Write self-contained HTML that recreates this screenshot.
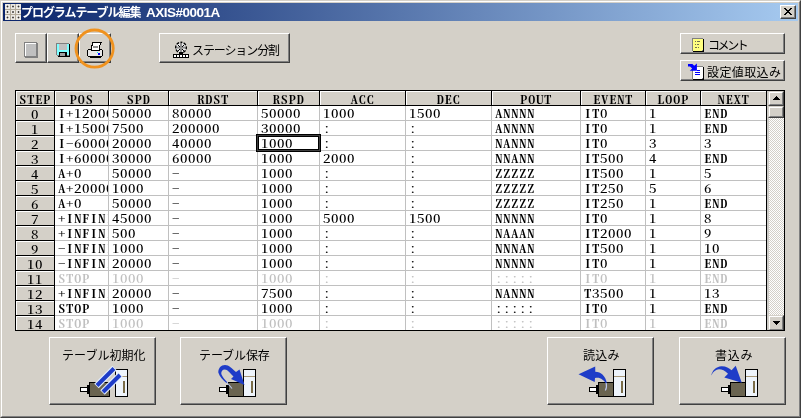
<!DOCTYPE html><html lang="ja"><head><meta charset="utf-8"><title>プログラムテーブル編集 AXIS#0001A</title><style>
html,body{margin:0;padding:0;}
body{width:801px;height:418px;overflow:hidden;background:#D4D0C8;position:relative;
 font-family:"Liberation Sans","Noto Sans CJK JP",sans-serif;font-size:12px;color:#000;}
.abs{position:absolute;}
.lbl,.ttext,.grid{will-change:transform;}
.win{position:absolute;left:0;top:0;width:801px;height:418px;box-sizing:border-box;background:#D4D0C8;
 border-left:1px solid #D4D0C8;border-top:1px solid #D4D0C8;border-right:1px solid #404040;border-bottom:1px solid #404040;}
.win2{position:absolute;left:1px;top:1px;width:799px;height:416px;box-sizing:border-box;
 border-left:1px solid #fff;border-top:1px solid #fff;border-right:1px solid #808080;border-bottom:1px solid #808080;}
.title{position:absolute;left:3px;top:3px;width:795px;height:18px;background:linear-gradient(to right,#0A246A 0%,#A6CAF0 100%);}
.ttext{position:absolute;left:23px;top:3px;height:18px;line-height:18px;color:#fff;font-weight:bold;font-size:12px;white-space:nowrap;letter-spacing:-0.6px;}
.btn{position:absolute;box-sizing:border-box;background:#D4D0C8;
 border-left:1px solid #fff;border-top:1px solid #fff;border-right:1px solid #404040;border-bottom:1px solid #404040;}
.btn::after{content:"";position:absolute;left:0;top:0;right:0;bottom:0;border-right:1px solid #808080;border-bottom:1px solid #808080;}
.lbl{position:absolute;white-space:nowrap;font-size:12px;line-height:14px;}
.grid{position:absolute;left:15px;top:90px;width:770px;height:241px;background:#000;}
.hc{position:absolute;box-sizing:border-box;background:#D4D0C8;box-shadow:inset 1px 1px 0 #fff;
 font-family:"Noto Serif CJK SC","IPAGothic","Liberation Mono",monospace;font-feature-settings:"hwid";font-weight:500;font-size:15px;letter-spacing:0.5px;text-align:center;white-space:nowrap;overflow:hidden;height:14px;line-height:14px;}
.dc{position:absolute;box-sizing:border-box;background:#fff;font-family:"Noto Serif CJK SC","IPAGothic","Liberation Mono",monospace;font-feature-settings:"hwid";font-weight:500;font-size:15px;letter-spacing:0.5px;
 white-space:nowrap;overflow:hidden;height:14px;line-height:14px;padding-left:3px;}
.hc span,.dc span{display:inline-block;transform:scaleY(0.78);transform-origin:0 100%;position:relative;}
.hc b,.dc b{font-weight:600;}
.hc span{top:0px;}
.dc span{top:-1px;}
.g{color:#C0C0C0;}
.vl{position:absolute;width:1px;background:#C0C0C0;}
.hl{position:absolute;height:1px;background:#C0C0C0;}
svg{position:absolute;overflow:visible;}
</style></head><body>
<div class="win"></div><div class="win2"></div>
<div class="title"></div>
<svg style="left:5px;top:4px" width="16" height="16" viewBox="0 0 16 16"><rect width="16" height="16" fill="#B4AC9C" shape-rendering="crispEdges"/>
<rect x="0" y="0" width="5" height="5" fill="#E4E0DA" shape-rendering="crispEdges"/>
<rect x="0.5" y="0.5" width="4" height="4" fill="#F8F7F4"/>
<circle cx="2.5" cy="2.5" r="0.95" fill="#35322E"/>
<rect x="6" y="0" width="4" height="5" fill="#E4E0DA" shape-rendering="crispEdges"/>
<rect x="6.5" y="0.5" width="3" height="4" fill="#F8F7F4"/>
<circle cx="8.0" cy="2.5" r="0.95" fill="#35322E"/>
<rect x="11" y="0" width="5" height="5" fill="#E4E0DA" shape-rendering="crispEdges"/>
<rect x="11.5" y="0.5" width="4" height="4" fill="#F8F7F4"/>
<circle cx="13.5" cy="2.5" r="0.95" fill="#35322E"/>
<rect x="0" y="6" width="5" height="4" fill="#E4E0DA" shape-rendering="crispEdges"/>
<rect x="0.5" y="6.5" width="4" height="3" fill="#F8F7F4"/>
<circle cx="2.5" cy="8.0" r="0.95" fill="#35322E"/>
<rect x="6" y="6" width="4" height="4" fill="#E4E0DA" shape-rendering="crispEdges"/>
<rect x="6.5" y="6.5" width="3" height="3" fill="#F8F7F4"/>
<circle cx="8.0" cy="8.0" r="0.95" fill="#35322E"/>
<rect x="11" y="6" width="5" height="4" fill="#E4E0DA" shape-rendering="crispEdges"/>
<rect x="11.5" y="6.5" width="4" height="3" fill="#F8F7F4"/>
<circle cx="13.5" cy="8.0" r="0.95" fill="#35322E"/>
<rect x="0" y="11" width="5" height="5" fill="#E4E0DA" shape-rendering="crispEdges"/>
<rect x="0.5" y="11.5" width="4" height="4" fill="#F8F7F4"/>
<circle cx="2.5" cy="13.5" r="0.95" fill="#35322E"/>
<rect x="6" y="11" width="4" height="5" fill="#E4E0DA" shape-rendering="crispEdges"/>
<rect x="6.5" y="11.5" width="3" height="4" fill="#F8F7F4"/>
<circle cx="8.0" cy="13.5" r="0.95" fill="#35322E"/>
<rect x="11" y="11" width="5" height="5" fill="#E4E0DA" shape-rendering="crispEdges"/>
<rect x="11.5" y="11.5" width="4" height="4" fill="#F8F7F4"/>
<circle cx="13.5" cy="13.5" r="0.95" fill="#35322E"/>
</svg>
<div class="ttext" id="t1" style="left:21px;top:4px;letter-spacing:-1.05px">プログラムテーブル編集</div>
<div class="ttext" id="t2" style="left:146px;top:4px;font-size:13.5px;letter-spacing:-0.5px">AXIS#0001A</div>
<div class="btn" style="left:780px;top:5px;width:16px;height:14px"></div>
<svg style="left:784px;top:8px" width="8" height="7" viewBox="0 0 8 7" shape-rendering="crispEdges"><path d="M0 0h2v1h-2zM6 0h2v1h-2zM1 1h2v1h-2zM5 1h2v1h-2zM2 2h4v1h-4zM3 3h2v1h-2zM2 4h4v1h-4zM1 5h2v1h-2zM5 5h2v1h-2zM0 6h2v1h-2zM6 6h2v1h-2z" fill="#000"/></svg>
<div class="btn" style="left:15px;top:33px;width:32px;height:30px"></div>
<div class="btn" style="left:47px;top:33px;width:32px;height:30px"></div>
<div class="btn" style="left:79px;top:33px;width:32px;height:30px"></div>
<svg style="left:24px;top:42px" width="14" height="16" viewBox="0 0 14 16" shape-rendering="crispEdges"><rect x="0" y="0" width="13" height="15" fill="#808080"/><rect x="1" y="1" width="13" height="15" fill="#808080"/><rect x="1" y="1" width="11" height="13" fill="#fff"/><rect x="2" y="2" width="10" height="12" fill="#C0C0C0"/></svg>
<svg style="left:56px;top:43px" width="14" height="14" viewBox="0 0 14 14" shape-rendering="crispEdges"><rect x="1" y="1" width="13" height="13" fill="#000"/><rect x="0" y="0" width="13" height="13" fill="#808080"/><rect x="1" y="1" width="12" height="11" fill="#80FFFF"/><rect x="3" y="0" width="8" height="7" fill="#808080"/><rect x="3" y="1" width="8" height="6" fill="#C0C0C0"/><rect x="3" y="9" width="8" height="4" fill="#000"/><rect x="4" y="10" width="5" height="3" fill="#A0A0A0"/><rect x="0" y="12" width="2" height="2" fill="#D4D0C8"/><rect x="1" y="12" width="2" height="1" fill="#808080"/></svg>
<svg style="left:87px;top:42px" width="16" height="16" viewBox="0 0 16 16" shape-rendering="crispEdges"><path d="M5 0h10v1h-1v2h-1v6h-9v-6h1z" fill="#000"/><path d="M6 1h7v2h-1v5h-7v-4h1z" fill="#fff"/><rect x="6" y="4" width="5" height="2" fill="#909090"/><path d="M1 7h3v2h9v-2h2v1h1v6h-1v1h-14v-1h-1v-6h1z" fill="#000"/><path d="M1 8h3v1h9v-1h2v6h-14z" fill="#E8E8E8"/><rect x="11" y="11" width="2" height="2" fill="#0000FF"/><rect x="10" y="10" width="1" height="1" fill="#00FFFF"/><rect x="3" y="15" width="11" height="1" fill="#000"/></svg>
<svg style="left:72px;top:26px" width="46" height="46" viewBox="0 0 46 46"><circle cx="22.6" cy="22.6" r="18.6" fill="none" stroke="#F0921E" stroke-width="2.8"/></svg>
<div class="btn" style="left:159px;top:33px;width:131px;height:30px"></div>
<svg style="left:173px;top:42px" width="16" height="16" viewBox="0 0 16 16"><circle cx="8" cy="5.6" r="5.3" fill="#EDEDED"/><rect x="7" y="1" width="2" height="9" fill="#909090"/><rect x="3.4" y="4.6" width="9" height="2" fill="#909090"/><circle cx="8" cy="5.6" r="5.3" fill="none" stroke="#000" stroke-width="1.4" stroke-dasharray="2.9 1.26" stroke-dashoffset="1.45" transform="rotate(-90 8 5.6)"/><g fill="#000"><rect x="5" y="3" width="1" height="1"/><rect x="10" y="3" width="1" height="1"/><rect x="5" y="8" width="1" height="1"/><rect x="10" y="8" width="1" height="1"/><rect x="6" y="4" width="1" height="1"/><rect x="9" y="4" width="1" height="1"/><rect x="6" y="7" width="1" height="1"/><rect x="9" y="7" width="1" height="1"/></g><g shape-rendering="crispEdges"><rect x="6" y="10" width="4" height="2" fill="#000"/><rect x="0" y="12" width="16" height="4" fill="#000"/><rect x="1" y="13" width="2" height="2" fill="#fff"/><rect x="4" y="13" width="2" height="2" fill="#fff"/><rect x="7" y="13" width="2" height="2" fill="#fff"/><rect x="10" y="13" width="2" height="2" fill="#fff"/><rect x="13" y="13" width="2" height="2" fill="#fff"/></g></svg>
<div class="lbl" id="l_station" style="left:192px;top:44px;letter-spacing:-1.1px">ステーション分割</div>
<div class="btn" style="left:680px;top:33px;width:105px;height:21px"></div>
<div class="btn" style="left:680px;top:60px;width:105px;height:21px"></div>
<svg style="left:692px;top:38px" width="12" height="14" viewBox="0 0 12 14" shape-rendering="crispEdges"><rect x="1" y="1" width="11" height="13" fill="#000"/><rect x="0" y="0" width="11" height="13" fill="#808080"/><rect x="1" y="1" width="10" height="12" fill="#FFFF80"/><rect x="10" y="12" width="1" height="1" fill="#808080"/><g fill="#707050"><rect x="3" y="3" width="1" height="1"/><rect x="5" y="3" width="3" height="1"/><rect x="3" y="6" width="1" height="1"/><rect x="5" y="6" width="2" height="1"/><rect x="3" y="9" width="2" height="1"/><rect x="6" y="9" width="1" height="1"/></g></svg>
<div class="lbl" id="l_comment" style="left:707.6px;top:39px;letter-spacing:-2.4px">コメント</div>
<svg style="left:688px;top:63px" width="16" height="17" viewBox="0 0 16 17" shape-rendering="crispEdges"><rect x="5" y="4" width="11" height="13" fill="#000"/><rect x="4" y="3" width="11" height="13" fill="#808080"/><rect x="5" y="4" width="10" height="12" fill="#fff"/><rect x="14" y="15" width="1" height="1" fill="#808080"/><g fill="#0000FF"><rect x="9" y="7" width="3" height="1"/><rect x="7" y="9" width="5" height="1"/><rect x="7" y="11" width="5" height="1"/></g><path shape-rendering="geometricPrecision" d="M0 1 L4.4 1 L6.2 2.8 L8.9 0.6 L8.9 7.8 L1.8 7.8 L4.2 5.6 L2 3.4 L0 3.4 Z" fill="#0000FF"/></svg>
<div class="lbl" id="l_import" style="left:707px;top:66px;letter-spacing:0.4px">設定値取込み</div>
<div class="grid">
<div class="abs" style="left:40px;top:16px;width:711px;height:224px;background:#fff"></div>
<div class="hc" style="left:1px;top:1px;width:38px"><span><b>STEP</b></span></div>
<div class="hc" style="left:40px;top:1px;width:53px"><span><b>POS</b></span></div>
<div class="hc" style="left:94px;top:1px;width:59px"><span><b>SPD</b></span></div>
<div class="hc" style="left:154px;top:1px;width:88px"><span><b>RDST</b></span></div>
<div class="hc" style="left:243px;top:1px;width:61px"><span><b>RSPD</b></span></div>
<div class="hc" style="left:305px;top:1px;width:85px"><span><b>ACC</b></span></div>
<div class="hc" style="left:391px;top:1px;width:85px"><span><b>DEC</b></span></div>
<div class="hc" style="left:477px;top:1px;width:88px"><span><b>POUT</b></span></div>
<div class="hc" style="left:566px;top:1px;width:64px"><span><b>EVENT</b></span></div>
<div class="hc" style="left:631px;top:1px;width:54px"><span><b>LOOP</b></span></div>
<div class="hc" style="left:686px;top:1px;width:65px"><span><b>NEXT</b></span></div>
<div class="hc" style="left:1px;top:16px;width:38px"><span>0</span></div>
<div class="dc" style="left:40px;top:16px;width:53px"><span><b>I</b>+12000</span></div>
<div class="dc" style="left:94px;top:16px;width:59px"><span>50000</span></div>
<div class="dc" style="left:154px;top:16px;width:88px"><span>80000</span></div>
<div class="dc" style="left:243px;top:16px;width:61px"><span>50000</span></div>
<div class="dc" style="left:305px;top:16px;width:85px"><span>1000</span></div>
<div class="dc" style="left:391px;top:16px;width:85px"><span>1500</span></div>
<div class="dc" style="left:477px;top:16px;width:88px"><span><b>ANNNN</b></span></div>
<div class="dc" style="left:566px;top:16px;width:64px"><span><b>IT</b>0</span></div>
<div class="dc" style="left:631px;top:16px;width:54px"><span>1</span></div>
<div class="dc" style="left:686px;top:16px;width:65px"><span><b>END</b></span></div>
<div class="hc" style="left:1px;top:31px;width:38px"><span>1</span></div>
<div class="dc" style="left:40px;top:31px;width:53px"><span><b>I</b>+15000</span></div>
<div class="dc" style="left:94px;top:31px;width:59px"><span>7500</span></div>
<div class="dc" style="left:154px;top:31px;width:88px"><span>200000</span></div>
<div class="dc" style="left:243px;top:31px;width:61px"><span>30000</span></div>
<div class="dc" style="left:305px;top:31px;width:85px"><span>:</span></div>
<div class="dc" style="left:391px;top:31px;width:85px"><span>:</span></div>
<div class="dc" style="left:477px;top:31px;width:88px"><span><b>ANNNN</b></span></div>
<div class="dc" style="left:566px;top:31px;width:64px"><span><b>IT</b>0</span></div>
<div class="dc" style="left:631px;top:31px;width:54px"><span>1</span></div>
<div class="dc" style="left:686px;top:31px;width:65px"><span><b>END</b></span></div>
<div class="hc" style="left:1px;top:46px;width:38px"><span>2</span></div>
<div class="dc" style="left:40px;top:46px;width:53px"><span><b>I</b>-60000</span></div>
<div class="dc" style="left:94px;top:46px;width:59px"><span>20000</span></div>
<div class="dc" style="left:154px;top:46px;width:88px"><span>40000</span></div>
<div class="dc" style="left:243px;top:46px;width:61px"><span>1000</span></div>
<div class="dc" style="left:305px;top:46px;width:85px"><span>:</span></div>
<div class="dc" style="left:391px;top:46px;width:85px"><span>:</span></div>
<div class="dc" style="left:477px;top:46px;width:88px"><span><b>NANNN</b></span></div>
<div class="dc" style="left:566px;top:46px;width:64px"><span><b>IT</b>0</span></div>
<div class="dc" style="left:631px;top:46px;width:54px"><span>3</span></div>
<div class="dc" style="left:686px;top:46px;width:65px"><span>3</span></div>
<div class="hc" style="left:1px;top:61px;width:38px"><span>3</span></div>
<div class="dc" style="left:40px;top:61px;width:53px"><span><b>I</b>+60000</span></div>
<div class="dc" style="left:94px;top:61px;width:59px"><span>30000</span></div>
<div class="dc" style="left:154px;top:61px;width:88px"><span>60000</span></div>
<div class="dc" style="left:243px;top:61px;width:61px"><span>1000</span></div>
<div class="dc" style="left:305px;top:61px;width:85px"><span>2000</span></div>
<div class="dc" style="left:391px;top:61px;width:85px"><span>:</span></div>
<div class="dc" style="left:477px;top:61px;width:88px"><span><b>NNANN</b></span></div>
<div class="dc" style="left:566px;top:61px;width:64px"><span><b>IT</b>500</span></div>
<div class="dc" style="left:631px;top:61px;width:54px"><span>4</span></div>
<div class="dc" style="left:686px;top:61px;width:65px"><span><b>END</b></span></div>
<div class="hc" style="left:1px;top:76px;width:38px"><span>4</span></div>
<div class="dc" style="left:40px;top:76px;width:53px"><span><b>A</b>+0</span></div>
<div class="dc" style="left:94px;top:76px;width:59px"><span>50000</span></div>
<div class="dc" style="left:154px;top:76px;width:88px"><span>-</span></div>
<div class="dc" style="left:243px;top:76px;width:61px"><span>1000</span></div>
<div class="dc" style="left:305px;top:76px;width:85px"><span>:</span></div>
<div class="dc" style="left:391px;top:76px;width:85px"><span>:</span></div>
<div class="dc" style="left:477px;top:76px;width:88px"><span><b>ZZZZZ</b></span></div>
<div class="dc" style="left:566px;top:76px;width:64px"><span><b>IT</b>500</span></div>
<div class="dc" style="left:631px;top:76px;width:54px"><span>1</span></div>
<div class="dc" style="left:686px;top:76px;width:65px"><span>5</span></div>
<div class="hc" style="left:1px;top:91px;width:38px"><span>5</span></div>
<div class="dc" style="left:40px;top:91px;width:53px"><span><b>A</b>+20000</span></div>
<div class="dc" style="left:94px;top:91px;width:59px"><span>1000</span></div>
<div class="dc" style="left:154px;top:91px;width:88px"><span>-</span></div>
<div class="dc" style="left:243px;top:91px;width:61px"><span>1000</span></div>
<div class="dc" style="left:305px;top:91px;width:85px"><span>:</span></div>
<div class="dc" style="left:391px;top:91px;width:85px"><span>:</span></div>
<div class="dc" style="left:477px;top:91px;width:88px"><span><b>ZZZZZ</b></span></div>
<div class="dc" style="left:566px;top:91px;width:64px"><span><b>IT</b>250</span></div>
<div class="dc" style="left:631px;top:91px;width:54px"><span>5</span></div>
<div class="dc" style="left:686px;top:91px;width:65px"><span>6</span></div>
<div class="hc" style="left:1px;top:106px;width:38px"><span>6</span></div>
<div class="dc" style="left:40px;top:106px;width:53px"><span><b>A</b>+0</span></div>
<div class="dc" style="left:94px;top:106px;width:59px"><span>50000</span></div>
<div class="dc" style="left:154px;top:106px;width:88px"><span>-</span></div>
<div class="dc" style="left:243px;top:106px;width:61px"><span>1000</span></div>
<div class="dc" style="left:305px;top:106px;width:85px"><span>:</span></div>
<div class="dc" style="left:391px;top:106px;width:85px"><span>:</span></div>
<div class="dc" style="left:477px;top:106px;width:88px"><span><b>ZZZZZ</b></span></div>
<div class="dc" style="left:566px;top:106px;width:64px"><span><b>IT</b>250</span></div>
<div class="dc" style="left:631px;top:106px;width:54px"><span>1</span></div>
<div class="dc" style="left:686px;top:106px;width:65px"><span><b>END</b></span></div>
<div class="hc" style="left:1px;top:121px;width:38px"><span>7</span></div>
<div class="dc" style="left:40px;top:121px;width:53px"><span>+<b>INFINITY</b></span></div>
<div class="dc" style="left:94px;top:121px;width:59px"><span>45000</span></div>
<div class="dc" style="left:154px;top:121px;width:88px"><span>-</span></div>
<div class="dc" style="left:243px;top:121px;width:61px"><span>1000</span></div>
<div class="dc" style="left:305px;top:121px;width:85px"><span>5000</span></div>
<div class="dc" style="left:391px;top:121px;width:85px"><span>1500</span></div>
<div class="dc" style="left:477px;top:121px;width:88px"><span><b>NNNNN</b></span></div>
<div class="dc" style="left:566px;top:121px;width:64px"><span><b>IT</b>0</span></div>
<div class="dc" style="left:631px;top:121px;width:54px"><span>1</span></div>
<div class="dc" style="left:686px;top:121px;width:65px"><span>8</span></div>
<div class="hc" style="left:1px;top:136px;width:38px"><span>8</span></div>
<div class="dc" style="left:40px;top:136px;width:53px"><span>+<b>INFINITY</b></span></div>
<div class="dc" style="left:94px;top:136px;width:59px"><span>500</span></div>
<div class="dc" style="left:154px;top:136px;width:88px"><span>-</span></div>
<div class="dc" style="left:243px;top:136px;width:61px"><span>1000</span></div>
<div class="dc" style="left:305px;top:136px;width:85px"><span>:</span></div>
<div class="dc" style="left:391px;top:136px;width:85px"><span>:</span></div>
<div class="dc" style="left:477px;top:136px;width:88px"><span><b>NAAAN</b></span></div>
<div class="dc" style="left:566px;top:136px;width:64px"><span><b>IT</b>2000</span></div>
<div class="dc" style="left:631px;top:136px;width:54px"><span>1</span></div>
<div class="dc" style="left:686px;top:136px;width:65px"><span>9</span></div>
<div class="hc" style="left:1px;top:151px;width:38px"><span>9</span></div>
<div class="dc" style="left:40px;top:151px;width:53px"><span>-<b>INFINITY</b></span></div>
<div class="dc" style="left:94px;top:151px;width:59px"><span>1000</span></div>
<div class="dc" style="left:154px;top:151px;width:88px"><span>-</span></div>
<div class="dc" style="left:243px;top:151px;width:61px"><span>1000</span></div>
<div class="dc" style="left:305px;top:151px;width:85px"><span>:</span></div>
<div class="dc" style="left:391px;top:151px;width:85px"><span>:</span></div>
<div class="dc" style="left:477px;top:151px;width:88px"><span><b>NNNAN</b></span></div>
<div class="dc" style="left:566px;top:151px;width:64px"><span><b>IT</b>500</span></div>
<div class="dc" style="left:631px;top:151px;width:54px"><span>1</span></div>
<div class="dc" style="left:686px;top:151px;width:65px"><span>10</span></div>
<div class="hc" style="left:1px;top:166px;width:38px"><span>10</span></div>
<div class="dc" style="left:40px;top:166px;width:53px"><span>-<b>INFINITY</b></span></div>
<div class="dc" style="left:94px;top:166px;width:59px"><span>20000</span></div>
<div class="dc" style="left:154px;top:166px;width:88px"><span>-</span></div>
<div class="dc" style="left:243px;top:166px;width:61px"><span>1000</span></div>
<div class="dc" style="left:305px;top:166px;width:85px"><span>:</span></div>
<div class="dc" style="left:391px;top:166px;width:85px"><span>:</span></div>
<div class="dc" style="left:477px;top:166px;width:88px"><span><b>NNNNN</b></span></div>
<div class="dc" style="left:566px;top:166px;width:64px"><span><b>IT</b>0</span></div>
<div class="dc" style="left:631px;top:166px;width:54px"><span>1</span></div>
<div class="dc" style="left:686px;top:166px;width:65px"><span><b>END</b></span></div>
<div class="hc" style="left:1px;top:181px;width:38px"><span>11</span></div>
<div class="dc g" style="left:40px;top:181px;width:53px"><span><b>STOP</b></span></div>
<div class="dc g" style="left:94px;top:181px;width:59px"><span>1000</span></div>
<div class="dc g" style="left:154px;top:181px;width:88px"><span>-</span></div>
<div class="dc g" style="left:243px;top:181px;width:61px"><span>1000</span></div>
<div class="dc g" style="left:305px;top:181px;width:85px"><span>:</span></div>
<div class="dc g" style="left:391px;top:181px;width:85px"><span>:</span></div>
<div class="dc g" style="left:477px;top:181px;width:88px"><span>:::::</span></div>
<div class="dc g" style="left:566px;top:181px;width:64px"><span><b>IT</b>0</span></div>
<div class="dc g" style="left:631px;top:181px;width:54px"><span>1</span></div>
<div class="dc g" style="left:686px;top:181px;width:65px"><span><b>END</b></span></div>
<div class="hc" style="left:1px;top:196px;width:38px"><span>12</span></div>
<div class="dc" style="left:40px;top:196px;width:53px"><span>+<b>INFINITY</b></span></div>
<div class="dc" style="left:94px;top:196px;width:59px"><span>20000</span></div>
<div class="dc" style="left:154px;top:196px;width:88px"><span>-</span></div>
<div class="dc" style="left:243px;top:196px;width:61px"><span>7500</span></div>
<div class="dc" style="left:305px;top:196px;width:85px"><span>:</span></div>
<div class="dc" style="left:391px;top:196px;width:85px"><span>:</span></div>
<div class="dc" style="left:477px;top:196px;width:88px"><span><b>NANNN</b></span></div>
<div class="dc" style="left:566px;top:196px;width:64px"><span><b>T</b>3500</span></div>
<div class="dc" style="left:631px;top:196px;width:54px"><span>1</span></div>
<div class="dc" style="left:686px;top:196px;width:65px"><span>13</span></div>
<div class="hc" style="left:1px;top:211px;width:38px"><span>13</span></div>
<div class="dc" style="left:40px;top:211px;width:53px"><span><b>STOP</b></span></div>
<div class="dc" style="left:94px;top:211px;width:59px"><span>1000</span></div>
<div class="dc" style="left:154px;top:211px;width:88px"><span>-</span></div>
<div class="dc" style="left:243px;top:211px;width:61px"><span>1000</span></div>
<div class="dc" style="left:305px;top:211px;width:85px"><span>:</span></div>
<div class="dc" style="left:391px;top:211px;width:85px"><span>:</span></div>
<div class="dc" style="left:477px;top:211px;width:88px"><span>:::::</span></div>
<div class="dc" style="left:566px;top:211px;width:64px"><span><b>IT</b>0</span></div>
<div class="dc" style="left:631px;top:211px;width:54px"><span>1</span></div>
<div class="dc" style="left:686px;top:211px;width:65px"><span><b>END</b></span></div>
<div class="hc" style="left:1px;top:226px;width:38px"><span>14</span></div>
<div class="dc g" style="left:40px;top:226px;width:53px"><span><b>STOP</b></span></div>
<div class="dc g" style="left:94px;top:226px;width:59px"><span>1000</span></div>
<div class="dc g" style="left:154px;top:226px;width:88px"><span>-</span></div>
<div class="dc g" style="left:243px;top:226px;width:61px"><span>1000</span></div>
<div class="dc g" style="left:305px;top:226px;width:85px"><span>:</span></div>
<div class="dc g" style="left:391px;top:226px;width:85px"><span>:</span></div>
<div class="dc g" style="left:477px;top:226px;width:88px"><span>:::::</span></div>
<div class="dc g" style="left:566px;top:226px;width:64px"><span><b>IT</b>0</span></div>
<div class="dc g" style="left:631px;top:226px;width:54px"><span>1</span></div>
<div class="dc g" style="left:686px;top:226px;width:65px"><span><b>END</b></span></div>
<div class="vl" style="left:93px;top:16px;height:224px"></div>
<div class="vl" style="left:153px;top:16px;height:224px"></div>
<div class="vl" style="left:242px;top:16px;height:224px"></div>
<div class="vl" style="left:304px;top:16px;height:224px"></div>
<div class="vl" style="left:390px;top:16px;height:224px"></div>
<div class="vl" style="left:476px;top:16px;height:224px"></div>
<div class="vl" style="left:565px;top:16px;height:224px"></div>
<div class="vl" style="left:630px;top:16px;height:224px"></div>
<div class="vl" style="left:685px;top:16px;height:224px"></div>
<div class="vl" style="left:751px;top:16px;height:224px"></div>
<div class="hl" style="left:40px;top:30px;width:711px"></div>
<div class="hl" style="left:40px;top:45px;width:711px"></div>
<div class="hl" style="left:40px;top:60px;width:711px"></div>
<div class="hl" style="left:40px;top:75px;width:711px"></div>
<div class="hl" style="left:40px;top:90px;width:711px"></div>
<div class="hl" style="left:40px;top:105px;width:711px"></div>
<div class="hl" style="left:40px;top:120px;width:711px"></div>
<div class="hl" style="left:40px;top:135px;width:711px"></div>
<div class="hl" style="left:40px;top:150px;width:711px"></div>
<div class="hl" style="left:40px;top:165px;width:711px"></div>
<div class="hl" style="left:40px;top:180px;width:711px"></div>
<div class="hl" style="left:40px;top:195px;width:711px"></div>
<div class="hl" style="left:40px;top:210px;width:711px"></div>
<div class="hl" style="left:40px;top:225px;width:711px"></div>
<div class="hl" style="left:40px;top:240px;width:711px"></div>
<div class="abs" style="left:39px;top:0;width:1px;height:241px;background:#000"></div>
<div class="abs" style="left:751px;top:0;width:1px;height:241px;background:#000"></div>
<div class="abs" style="left:0;top:240px;width:770px;height:1px;background:#000"></div>
<div class="abs" style="left:0;top:15px;width:40px;height:1px;background:#000"></div>
<div class="abs" style="left:0;top:30px;width:40px;height:1px;background:#000"></div>
<div class="abs" style="left:0;top:45px;width:40px;height:1px;background:#000"></div>
<div class="abs" style="left:0;top:60px;width:40px;height:1px;background:#000"></div>
<div class="abs" style="left:0;top:75px;width:40px;height:1px;background:#000"></div>
<div class="abs" style="left:0;top:90px;width:40px;height:1px;background:#000"></div>
<div class="abs" style="left:0;top:105px;width:40px;height:1px;background:#000"></div>
<div class="abs" style="left:0;top:120px;width:40px;height:1px;background:#000"></div>
<div class="abs" style="left:0;top:135px;width:40px;height:1px;background:#000"></div>
<div class="abs" style="left:0;top:150px;width:40px;height:1px;background:#000"></div>
<div class="abs" style="left:0;top:165px;width:40px;height:1px;background:#000"></div>
<div class="abs" style="left:0;top:180px;width:40px;height:1px;background:#000"></div>
<div class="abs" style="left:0;top:195px;width:40px;height:1px;background:#000"></div>
<div class="abs" style="left:0;top:210px;width:40px;height:1px;background:#000"></div>
<div class="abs" style="left:0;top:225px;width:40px;height:1px;background:#000"></div>
<div class="abs" style="left:0;top:240px;width:40px;height:1px;background:#000"></div>
<div class="abs" style="left:0;top:15px;width:752px;height:1px;background:#000"></div>
<div class="abs" style="left:93px;top:0;width:1px;height:16px;background:#000"></div>
<div class="abs" style="left:153px;top:0;width:1px;height:16px;background:#000"></div>
<div class="abs" style="left:242px;top:0;width:1px;height:16px;background:#000"></div>
<div class="abs" style="left:304px;top:0;width:1px;height:16px;background:#000"></div>
<div class="abs" style="left:390px;top:0;width:1px;height:16px;background:#000"></div>
<div class="abs" style="left:476px;top:0;width:1px;height:16px;background:#000"></div>
<div class="abs" style="left:565px;top:0;width:1px;height:16px;background:#000"></div>
<div class="abs" style="left:630px;top:0;width:1px;height:16px;background:#000"></div>
<div class="abs" style="left:685px;top:0;width:1px;height:16px;background:#000"></div>
<div class="abs" style="left:751px;top:0;width:1px;height:16px;background:#000"></div>
<div class="abs" style="left:241px;top:44px;width:65px;height:18px;box-sizing:border-box;box-shadow:inset 0 0 0 1px #000,inset 0 0 0 2px #3F3F3F,inset 0 0 0 3px #000"></div>
<div class="abs" style="left:752px;top:1px;width:2px;height:239px;background:#CCCAC6"></div>
<svg style="left:754px;top:1px" width="15" height="239"><defs><pattern id="dz" width="2" height="2" patternUnits="userSpaceOnUse"><rect width="2" height="2" fill="#fff"/><rect width="1" height="1" fill="#D4D0C8"/><rect x="1" y="1" width="1" height="1" fill="#D4D0C8"/></pattern></defs><rect width="15" height="239" fill="url(#dz)" shape-rendering="crispEdges"/></svg>
<div class="abs" style="left:753px;top:1px;width:16px;height:15px;box-sizing:border-box;background:#D4D0C8;border-left:1px solid #D4D0C8;border-top:1px solid #D4D0C8;border-right:1px solid #404040;border-bottom:1px solid #404040"><div style="position:absolute;left:0;top:0;right:0;bottom:0;border-left:1px solid #fff;border-top:1px solid #fff;border-right:1px solid #808080;border-bottom:1px solid #808080"></div></div>
<div class="abs" style="left:753px;top:16px;width:16px;height:12px;box-sizing:border-box;background:#D4D0C8;border-left:1px solid #D4D0C8;border-top:1px solid #D4D0C8;border-right:1px solid #404040;border-bottom:1px solid #404040"><div style="position:absolute;left:0;top:0;right:0;bottom:0;border-left:1px solid #fff;border-top:1px solid #fff;border-right:1px solid #808080;border-bottom:1px solid #808080"></div></div>
<div class="abs" style="left:753px;top:225px;width:16px;height:16px;box-sizing:border-box;background:#D4D0C8;border-left:1px solid #D4D0C8;border-top:1px solid #D4D0C8;border-right:1px solid #404040;border-bottom:1px solid #404040"><div style="position:absolute;left:0;top:0;right:0;bottom:0;border-left:1px solid #fff;border-top:1px solid #fff;border-right:1px solid #808080;border-bottom:1px solid #808080"></div></div>
<div class="abs" style="left:0;top:240px;width:770px;height:1px;background:#000"></div>
<svg style="left:758px;top:6px" width="7" height="4" viewBox="0 0 7 4" shape-rendering="crispEdges"><path d="M3 0h1v1h1v1h1v1h1v1h-7v-1h1v-1h1v-1h1z" fill="#000"/></svg>
<svg style="left:758px;top:231px" width="7" height="4" viewBox="0 0 7 4" shape-rendering="crispEdges"><path d="M0 0h7v1h-1v1h-1v1h-1v1h-1v-1h-1v-1h-1v-1h-1z" fill="#000"/></svg>
</div>
<div class="btn" style="left:49px;top:337px;width:107px;height:68px"></div>
<div class="btn" style="left:180px;top:337px;width:107px;height:68px"></div>
<div class="btn" style="left:547px;top:337px;width:107px;height:68px"></div>
<div class="btn" style="left:679px;top:337px;width:107px;height:68px"></div>
<div class="lbl" id="l_b1" style="left:62px;top:349px;letter-spacing:0.05px">テーブル初期化</div>
<div class="lbl" id="l_b2" style="left:199px;top:349px;letter-spacing:-0.1px">テーブル保存</div>
<div class="lbl" id="l_b3" style="left:583px;top:349px;letter-spacing:0.2px">読込み</div>
<div class="lbl" id="l_b4" style="left:715px;top:349px;letter-spacing:0.7px">書込み</div>
<svg style="left:0;top:0" width="801" height="418" viewBox="0 0 801 418">
<g shape-rendering="crispEdges"><rect x="80" y="387" width="8" height="5" fill="#000"/><rect x="81" y="388" width="7" height="3" fill="#fff"/><rect x="87" y="385" width="3" height="9" fill="#000"/><rect x="89" y="382" width="21" height="15" fill="#000"/><rect x="90" y="383" width="19" height="13" fill="#6A6450"/><rect x="115" y="369" width="13" height="28" rx="1.5" fill="#000"/><rect x="116" y="370" width="11" height="26" fill="#EEF4FB"/><rect x="116" y="376" width="11" height="1" fill="#A89878"/><rect x="123" y="381" width="2" height="12" fill="#7A6C48"/><rect x="219" y="387" width="8" height="5" fill="#000"/><rect x="220" y="388" width="7" height="3" fill="#fff"/><rect x="226" y="385" width="3" height="9" fill="#000"/><rect x="228" y="382" width="16" height="15" fill="#000"/><rect x="229" y="383" width="14" height="13" fill="#6A6450"/><rect x="243" y="369" width="13" height="28" rx="1.5" fill="#000"/><rect x="244" y="370" width="11" height="26" fill="#EEF4FB"/><rect x="244" y="376" width="11" height="1" fill="#A89878"/><rect x="251" y="381" width="2" height="12" fill="#7A6C48"/><rect x="589" y="387" width="8" height="5" fill="#000"/><rect x="590" y="388" width="7" height="3" fill="#fff"/><rect x="596" y="385" width="3" height="9" fill="#000"/><rect x="598" y="382" width="16" height="15" fill="#000"/><rect x="599" y="383" width="14" height="13" fill="#6A6450"/><rect x="613" y="369" width="13" height="28" rx="1.5" fill="#000"/><rect x="614" y="370" width="11" height="26" fill="#EEF4FB"/><rect x="614" y="376" width="11" height="1" fill="#A89878"/><rect x="621" y="381" width="2" height="12" fill="#7A6C48"/><rect x="721" y="387" width="8" height="5" fill="#000"/><rect x="722" y="388" width="7" height="3" fill="#fff"/><rect x="728" y="385" width="3" height="9" fill="#000"/><rect x="730" y="382" width="16" height="15" fill="#000"/><rect x="731" y="383" width="14" height="13" fill="#6A6450"/><rect x="745" y="369" width="13" height="28" rx="1.5" fill="#000"/><rect x="746" y="370" width="11" height="26" fill="#EEF4FB"/><rect x="746" y="376" width="11" height="1" fill="#A89878"/><rect x="753" y="381" width="2" height="12" fill="#7A6C48"/></g>
<g stroke-linecap="butt"><path d="M96.5 386 L114.5 368" stroke="#E4F0FF" stroke-width="6.4"/><path d="M97 385.5 L114 368.5" stroke="#1E3CC8" stroke-width="4"/><path d="M102.5 392.5 L120.5 374.5" stroke="#E4F0FF" stroke-width="6.4"/><path d="M103 392 L120 375" stroke="#1E3CC8" stroke-width="4"/></g>
<path d="M218.3 372.5 C218.3 368 221 365 225 365 C229 365 232 368.5 236 372 L239.5 369.5 L244.5 385 L231 379 L233.5 376.5 C230 373 227.5 369.5 224.8 369.5 C222.5 369.5 221 371.5 221.3 374 C222.5 377 225 380 227.5 382.5 L226.5 383 C223 380 219.5 376.5 218.3 372.5 Z" fill="#1E3CC8"/>
<path d="M227 382.5 L232 388.5" stroke="#BCC8EE" stroke-width="1.1" fill="none"/>
<path d="M578.5 374.2 L595.2 366.5 L595.3 371.8 C601 372 605.5 376 606.8 383 L605.6 383.4 C605 381.5 604 380.8 602.5 379.8 C600 377.5 597.5 377.5 595 378 L594.7 382 Z" fill="#1E3CC8"/>
<path d="M606.2 383 C606.8 386 606.3 389 605.3 390.5" stroke="#BCC8EE" stroke-width="1.2" fill="none"/>
<path d="M711.3 375.5 C712 371 716 366.5 721.5 366.3 C726 366.2 729 368 731.6 370.2 L735.7 365.7 L741.8 382.7 L724.3 377.5 L728 373.8 C725 370.5 722 369.3 719 369.3 C716 369.5 713 371.5 711.3 375.5 Z" fill="#1E3CC8"/>
</svg>
</body></html>
